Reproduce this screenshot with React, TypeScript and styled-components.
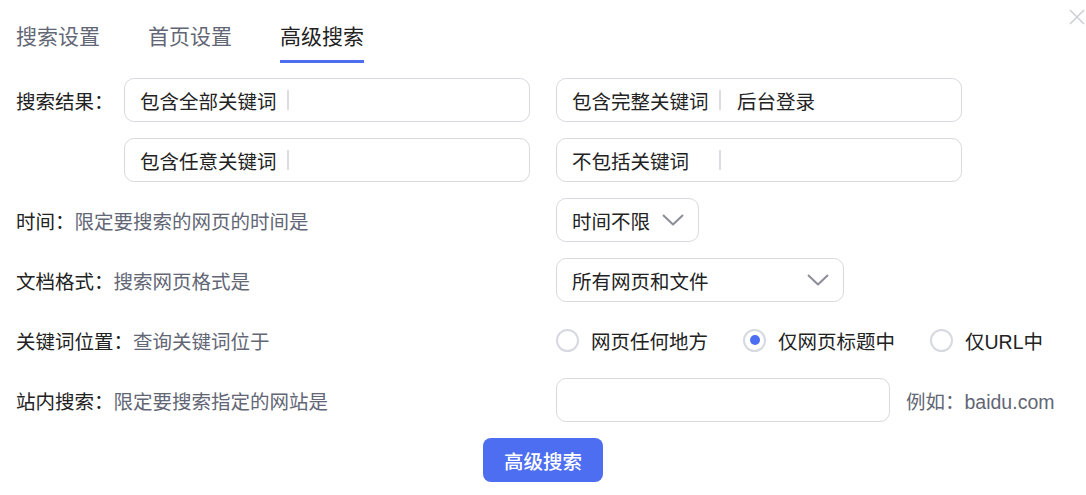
import React from "react";
import styled, { createGlobalStyle } from "styled-components";

const FONT = `"Liberation Sans", "Noto Sans CJK SC", "Noto Sans", sans-serif`;

const Global = createGlobalStyle`
  html, body { margin: 0; padding: 0; background: #fff; }
  body { font-family: ${FONT}; color: #222; }
  * { box-sizing: border-box; }
`;

const Page = styled.div`
  position: relative;
  width: 1086px;
  height: 495px;
  padding: 22px 0 0 16px;
  display: flex;
  flex-direction: column;
`;

const Close = styled.button`
  position: absolute;
  top: 8px;
  right: 0;
  width: 18px;
  height: 18px;
  padding: 0;
  border: none;
  background: transparent;
  display: flex;
  align-items: center;
  justify-content: center;
`;

const Tabs = styled.div`
  display: flex;
  gap: 48px;
`;

const Tab = styled.div<{ $active?: boolean }>`
  font-size: 21px;
  line-height: 30px;
  padding-bottom: 8px;
  color: ${(p) => (p.$active ? "#222" : "#626675")};
  border-bottom: 3px solid ${(p) => (p.$active ? "#4e6ef2" : "transparent")};
`;

const Form = styled.div`
  margin-top: 15px;
  display: flex;
  flex-direction: column;
  gap: 16px;
`;

const Row = styled.div<{ $indent?: number }>`
  display: flex;
  align-items: center;
  height: 44px;
  padding-left: ${(p) => p.$indent ?? 0}px;
`;

const Label = styled.div<{ $width: number }>`
  width: ${(p) => p.$width}px;
  flex: none;
  font-size: 19.5px;
  color: #222;
  white-space: nowrap;
`;

const Hint = styled.span`
  color: #626675;
`;

const Inputs = styled.div`
  display: flex;
  gap: 26px;
`;

const Box = styled.div<{ $width: number }>`
  width: ${(p) => p.$width}px;
  height: 44px;
  border: 1px solid #d7d9e0;
  border-radius: 10px;
  display: flex;
  align-items: center;
  padding: 0 15px;
  font-size: 19.5px;
  color: #222;
  background: #fff;
`;

const Prefix = styled.span`
  width: 147px;
  flex: none;
  white-space: nowrap;
`;

const Divider = styled.span`
  width: 2px;
  height: 20px;
  background: #dcdee4;
  flex: none;
`;

const Value = styled.span`
  margin-left: 16px;
`;

const Select = styled.div<{ $width?: number }>`
  ${(p) => (p.$width ? `width: ${p.$width}px;` : "")}
  height: 44px;
  border: 1px solid #d7d9e0;
  border-radius: 10px;
  display: flex;
  align-items: center;
  justify-content: space-between;
  gap: 12px;
  padding: 0 14px 0 15px;
  font-size: 19.5px;
  color: #222;
`;

const Radios = styled.div`
  display: flex;
  align-items: center;
  gap: 35px;
`;

const RadioItem = styled.label`
  display: flex;
  align-items: center;
  gap: 12px;
  font-size: 19.5px;
  color: #222;
`;

const Circle = styled.span<{ $checked?: boolean }>`
  width: 23px;
  height: 23px;
  border-radius: 50%;
  border: 2px solid #d7d9e0;
  display: flex;
  align-items: center;
  justify-content: center;
  &::after {
    content: "";
    width: 10px;
    height: 10px;
    border-radius: 50%;
    background: ${(p) => (p.$checked ? "#4e6ef2" : "transparent")};
  }
`;

const Example = styled.span`
  margin-left: 16px;
  font-size: 19.5px;
  color: #626675;
`;

const Actions = styled.div`
  display: flex;
  justify-content: center;
  padding-right: 16px;
`;

const Button = styled.button`
  width: 120px;
  height: 44px;
  border: none;
  border-radius: 8px;
  background: #4e6ef2;
  color: #fff;
  font-family: ${FONT};
  font-size: 19.5px;
  font-weight: 500;
  cursor: pointer;
`;

const Chevron = () => (
  <svg width="22" height="12" viewBox="0 0 22 12" fill="none">
    <polyline points="1,1 11,10.5 21,1" stroke="#8b8e99" strokeWidth="2" strokeLinejoin="round" />
  </svg>
);

const KeywordBox = ({ label, value }: { label: string; value?: string }) => (
  <Box $width={406}>
    <Prefix>{label}</Prefix>
    <Divider />
    {value && <Value>{value}</Value>}
  </Box>
);

export default function App() {
  return (
    <>
      <Global />
      <Page>
        <Close aria-label="关闭">
          <svg width="16" height="16" viewBox="0 0 16 16">
            <path d="M1 1 L15 15 M15 1 L1 15" stroke="#cdd0d6" strokeWidth="1.6" />
          </svg>
        </Close>
        <Tabs>
          <Tab>搜索设置</Tab>
          <Tab>首页设置</Tab>
          <Tab $active>高级搜索</Tab>
        </Tabs>
        <Form>
          <Row>
            <Label $width={108}>搜索结果：</Label>
            <Inputs>
              <KeywordBox label="包含全部关键词" />
              <KeywordBox label="包含完整关键词" value="后台登录" />
            </Inputs>
          </Row>
          <Row $indent={108}>
            <Inputs>
              <KeywordBox label="包含任意关键词" />
              <KeywordBox label="不包括关键词" />
            </Inputs>
          </Row>
          <Row>
            <Label $width={540}>
              时间：<Hint>限定要搜索的网页的时间是</Hint>
            </Label>
            <Select>
              <span>时间不限</span>
              <Chevron />
            </Select>
          </Row>
          <Row>
            <Label $width={540}>
              文档格式：<Hint>搜索网页格式是</Hint>
            </Label>
            <Select $width={288}>
              <span>所有网页和文件</span>
              <Chevron />
            </Select>
          </Row>
          <Row>
            <Label $width={540}>
              关键词位置：<Hint>查询关键词位于</Hint>
            </Label>
            <Radios>
              <RadioItem>
                <Circle />
                网页任何地方
              </RadioItem>
              <RadioItem>
                <Circle $checked />
                仅网页标题中
              </RadioItem>
              <RadioItem>
                <Circle />
                仅URL中
              </RadioItem>
            </Radios>
          </Row>
          <Row>
            <Label $width={540}>
              站内搜索：<Hint>限定要搜索指定的网站是</Hint>
            </Label>
            <Box $width={334} />
            <Example>例如：baidu.com</Example>
          </Row>
          <Actions>
            <Button>高级搜索</Button>
          </Actions>
        </Form>
      </Page>
    </>
  );
}
